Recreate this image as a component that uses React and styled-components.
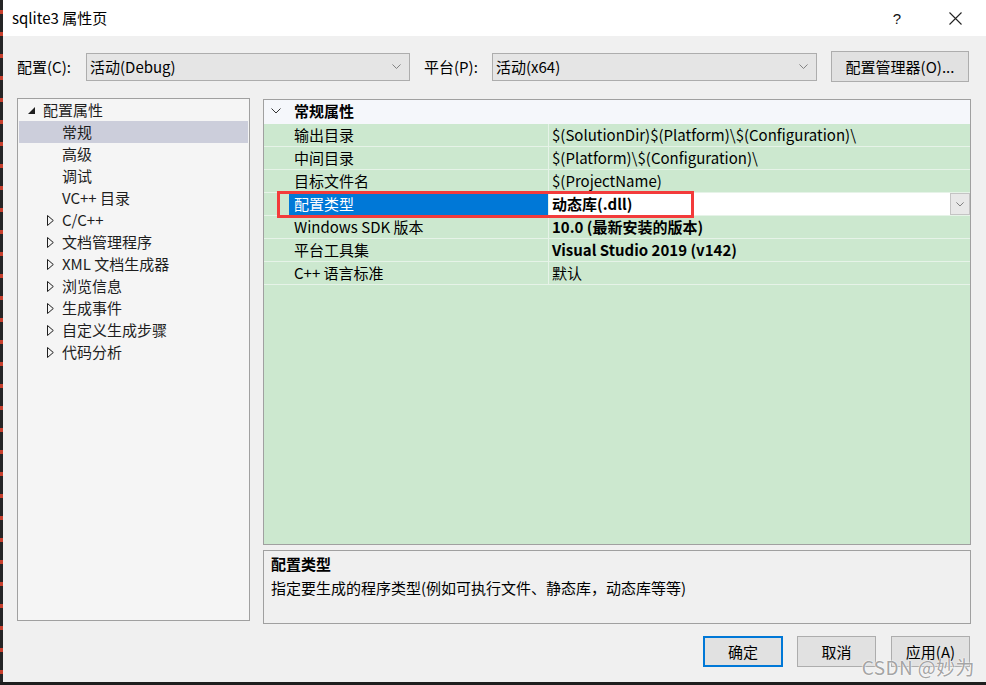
import React from "react";
import styled, { createGlobalStyle } from "styled-components";

const GlobalStyle = createGlobalStyle`
  html, body {
    margin: 0;
    padding: 0;
    background: #1e1e1e;
  }
  body {
    font-family: "Noto Sans CJK SC", "Noto Sans", sans-serif;
    font-size: 15px;
    color: #000;
  }
`;

const treeItems = [
  { label: "配置属性", level: 0, open: true },
  { label: "常规", level: 1, selected: true },
  { label: "高级", level: 1 },
  { label: "调试", level: 1 },
  { label: "VC++ 目录", level: 1 },
  { label: "C/C++", level: 1, closed: true },
  { label: "文档管理程序", level: 1, closed: true },
  { label: "XML 文档生成器", level: 1, closed: true },
  { label: "浏览信息", level: 1, closed: true },
  { label: "生成事件", level: 1, closed: true },
  { label: "自定义生成步骤", level: 1, closed: true },
  { label: "代码分析", level: 1, closed: true },
];

const props = [
  { name: "输出目录", value: "$(SolutionDir)$(Platform)\\$(Configuration)\\" },
  { name: "中间目录", value: "$(Platform)\\$(Configuration)\\" },
  { name: "目标文件名", value: "$(ProjectName)" },
  { name: "配置类型", value: "动态库(.dll)", bold: true, selected: true },
  { name: "Windows SDK 版本", value: "10.0 (最新安装的版本)", bold: true },
  { name: "平台工具集", value: "Visual Studio 2019 (v142)", bold: true },
  { name: "C++ 语言标准", value: "默认" },
];

const Screen = styled.div`
  display: flex;
  width: 986px;
  height: 685px;
  background: #1e1e1e;
  overflow: hidden;
`;

const EditorEdge = styled.div`
  width: 3px;
  height: 682px;
  flex: none;
  background: repeating-linear-gradient(
    to bottom,
    #252526 0 10px,
    #c8402e 10px 14px,
    #252526 14px 22px
  );
`;

const Window = styled.div`
  position: relative;
  width: 983px;
  height: 682px;
  display: flex;
  flex-direction: column;
`;

const TitleBar = styled.div`
  height: 36px;
  flex: none;
  background: #fff;
  display: flex;
  align-items: center;
  padding: 0 8px 0 9px;
`;

const Title = styled.div`
  flex: 1;
  font-size: 15px;
  color: #000;
  line-height: 20px;
`;

const TitleButton = styled.div`
  width: 46px;
  height: 36px;
  margin-right: ${(p) => p.mr || 0}px;
  display: flex;
  align-items: center;
  justify-content: center;
  font-family: "Liberation Sans", sans-serif;
  font-size: 15px;
  color: #111;
`;

const Body = styled.div`
  flex: 1;
  background: #f0f0f0;
  padding: 15px 15px 15px 14px;
  display: flex;
  flex-direction: column;
`;

const ConfigRow = styled.div`
  height: 31px;
  display: flex;
  align-items: center;
`;

const Label = styled.div`
  width: ${(p) => p.w}px;
  margin-left: ${(p) => p.ml || 0}px;
  line-height: 20px;
`;

const Combo = styled.div`
  width: ${(p) => p.w}px;
  height: 28px;
  box-sizing: border-box;
  border: 1px solid #adadad;
  background: #e5e5e5;
  display: flex;
  align-items: center;
  justify-content: space-between;
  padding: 0 8px 0 3px;
  line-height: 20px;
`;

const Button = styled.div`
  width: ${(p) => p.w}px;
  height: 31px;
  margin-left: ${(p) => p.ml || 0}px;
  box-sizing: border-box;
  border: ${(p) => (p.primary ? "2px solid #0078d7" : "1px solid #adadad")};
  background: #e1e1e1;
  display: flex;
  align-items: center;
  justify-content: center;
  line-height: 20px;
`;

const Main = styled.div`
  margin-top: 16px;
  height: 525px;
  display: grid;
  grid-template-columns: 233px 708px;
  column-gap: 13px;
`;

const Tree = styled.div`
  height: 523px;
  box-sizing: border-box;
  border: 1px solid #a0a0a0;
  background: #f5f5f5;
  padding: 0 1px;
`;

const TreeRow = styled.div`
  height: 22px;
  display: flex;
  align-items: center;
  padding-left: ${(p) => (p.level ? 28 : 9)}px;
  background: ${(p) => (p.selected ? "#cccedb" : "transparent")};
  color: #1e1e1e;
  line-height: 20px;
  white-space: nowrap;
`;

const Toggle = styled.div`
  width: 15px;
  height: 22px;
  flex: none;
  display: flex;
  align-items: center;
`;

const RightCol = styled.div`
  display: flex;
  flex-direction: column;
  gap: 5px;
`;

const PropGrid = styled.div`
  position: relative;
  margin-top: 1px;
  height: 446px;
  box-sizing: border-box;
  border: 1px solid #a0a0a0;
  background: #cce8cf;
`;

const GroupHeader = styled.div`
  height: 24px;
  background: #f5f7fb;
  display: flex;
  align-items: center;
  padding: 0 0 2px 7px;
  box-sizing: border-box;
  font-weight: bold;
  line-height: 20px;
`;

const GroupChevron = styled.div`
  width: 23px;
  display: flex;
  align-items: center;
`;

const PropRow = styled.div`
  height: 23px;
  box-sizing: border-box;
  display: grid;
  grid-template-columns: 25px 260px 1fr;
  border-bottom: 1px solid #e6f3e8;
`;

const NameCell = styled.div`
  grid-column: 2;
  display: flex;
  align-items: center;
  padding-left: 5px;
  border-right: 1px solid #e6f3e8;
  background: ${(p) => (p.selected ? "#0078d7" : "transparent")};
  color: ${(p) => (p.selected ? "#fff" : "#000")};
  line-height: 20px;
  white-space: nowrap;
`;

const ValueCell = styled.div`
  display: flex;
  align-items: center;
  justify-content: space-between;
  padding-left: 3px;
  background: ${(p) => (p.selected ? "#fff" : "transparent")};
  font-weight: ${(p) => (p.bold ? "bold" : "normal")};
  line-height: 20px;
  white-space: nowrap;
`;

const DropButton = styled.div`
  width: 20px;
  height: 22px;
  box-sizing: border-box;
  border: 1px solid #c4c4c4;
  background: #e8e8e8;
  display: flex;
  align-items: center;
  justify-content: center;
`;

const Highlight = styled.div`
  position: absolute;
  left: 13px;
  top: 91px;
  width: 417px;
  height: 27px;
  box-sizing: border-box;
  border: 3px solid #f33b3b;
  pointer-events: none;
`;

const Desc = styled.div`
  height: 74px;
  box-sizing: border-box;
  border: 1px solid #a0a0a0;
  background: #f0f0f0;
  padding: 3px 7px;
  line-height: 20px;
`;

const DescTitle = styled.div`
  font-weight: bold;
`;

const DescText = styled.div`
  margin-top: 4px;
`;

const Footer = styled.div`
  margin-top: 13px;
  display: flex;
  justify-content: flex-end;
  padding-right: 1px;
`;

const Watermark = styled.div`
  position: absolute;
  right: 11px;
  bottom: 3px;
  font-family: "Noto Sans CJK SC", sans-serif;
  font-size: 19px;
  line-height: 24px;
  color: rgba(140, 140, 140, 0.8);
  text-shadow: 0 0 1px #fff, 0 0 2px #fff;
  letter-spacing: 0.4px;
  pointer-events: none;
`;

const Chevron = ({ color = "#555", size = 10 }) => (
  <svg width={size} height={size * 0.6} viewBox="0 0 10 6">
    <polyline points="0.5,0.5 5,5 9.5,0.5" fill="none" stroke={color} strokeWidth="1" />
  </svg>
);

const OpenArrow = () => (
  <svg width="7" height="7" viewBox="0 0 7 7">
    <polygon points="7,0 7,7 0,7" fill="#1e1e1e" />
  </svg>
);

const ClosedArrow = () => (
  <svg width="7" height="11" viewBox="0 0 7 11">
    <polygon points="0.5,0.5 6.3,5.5 0.5,10.5" fill="none" stroke="#1e1e1e" strokeWidth="1" />
  </svg>
);

const CloseIcon = () => (
  <svg width="13" height="13" viewBox="0 0 13 13">
    <path d="M0.5 0.5 L12.5 12.5 M12.5 0.5 L0.5 12.5" stroke="#222" strokeWidth="1.1" />
  </svg>
);

export default function App() {
  return (
    <Screen>
      <GlobalStyle />
      <EditorEdge />
      <Window>
        <TitleBar>
          <Title>sqlite3 属性页</Title>
          <TitleButton mr={12}>?</TitleButton>
          <TitleButton>
            <CloseIcon />
          </TitleButton>
        </TitleBar>
        <Body>
          <ConfigRow>
            <Label w={69}>配置(C):</Label>
            <Combo w={324}>
              <span>活动(Debug)</span>
              <Chevron color="#777" size={9} />
            </Combo>
            <Label w={68} ml={14}>
              平台(P):
            </Label>
            <Combo w={325}>
              <span>活动(x64)</span>
              <Chevron color="#777" size={9} />
            </Combo>
            <Button w={138} ml={14}>
              配置管理器(O)...
            </Button>
          </ConfigRow>

          <Main>
            <Tree>
              {treeItems.map((it) => (
                <TreeRow key={it.label} level={it.level} selected={it.selected}>
                  <Toggle>
                    {it.open && <OpenArrow />}
                    {it.closed && <ClosedArrow />}
                  </Toggle>
                  {it.label}
                </TreeRow>
              ))}
            </Tree>

            <RightCol>
              <PropGrid>
                <GroupHeader>
                  <GroupChevron>
                    <Chevron color="#333" size={10} />
                  </GroupChevron>
                  常规属性
                </GroupHeader>
                {props.map((p) => (
                  <PropRow key={p.name}>
                    <NameCell selected={p.selected}>{p.name}</NameCell>
                    <ValueCell selected={p.selected} bold={p.bold}>
                      <span>{p.value}</span>
                      {p.selected && (
                        <DropButton>
                          <Chevron color="#666" size={8} />
                        </DropButton>
                      )}
                    </ValueCell>
                  </PropRow>
                ))}
                <Highlight />
              </PropGrid>
              <Desc>
                <DescTitle>配置类型</DescTitle>
                <DescText>指定要生成的程序类型(例如可执行文件、静态库，动态库等等)</DescText>
              </Desc>
            </RightCol>
          </Main>

          <Footer>
            <Button w={80} primary>
              确定
            </Button>
            <Button w={79} ml={14}>
              取消
            </Button>
            <Button w={79} ml={15}>
              应用(A)
            </Button>
          </Footer>
        </Body>
        <Watermark>CSDN @妙为</Watermark>
      </Window>
    </Screen>
  );
}
